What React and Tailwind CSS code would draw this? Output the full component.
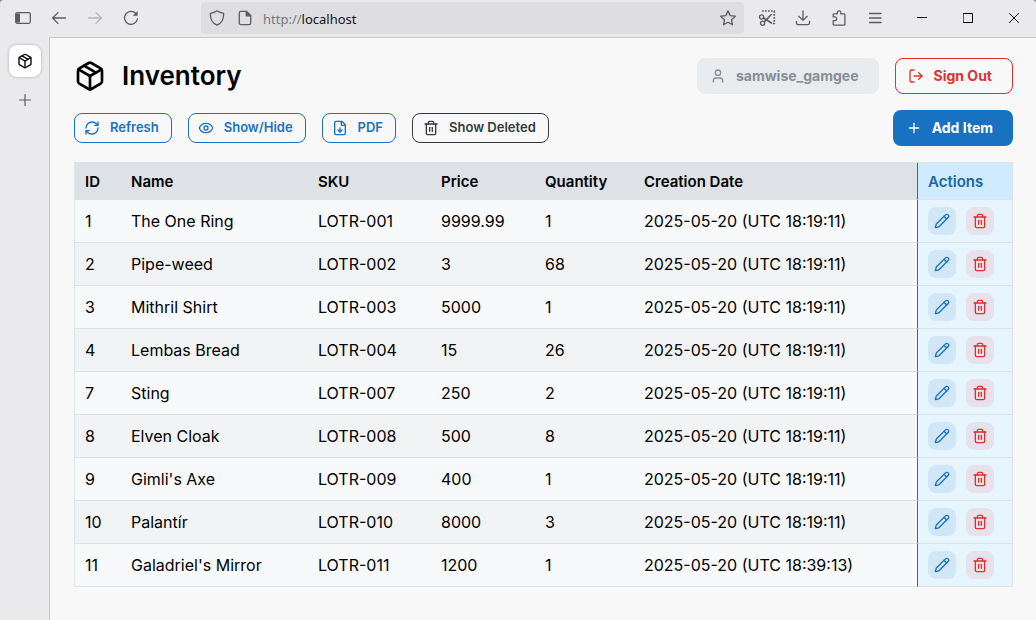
import React from "react";
import { Package, RefreshCw, Eye, FileDown, Trash2, Pencil, User, LogOut, Plus } from "lucide-react";

const items = [
  [1, "The One Ring", "LOTR-001", "9999.99", 1, "2025-05-20 (UTC 18:19:11)"],
  [2, "Pipe-weed", "LOTR-002", "3", 68, "2025-05-20 (UTC 18:19:11)"],
  [3, "Mithril Shirt", "LOTR-003", "5000", 1, "2025-05-20 (UTC 18:19:11)"],
  [4, "Lembas Bread", "LOTR-004", "15", 26, "2025-05-20 (UTC 18:19:11)"],
  [7, "Sting", "LOTR-007", "250", 2, "2025-05-20 (UTC 18:19:11)"],
  [8, "Elven Cloak", "LOTR-008", "500", 8, "2025-05-20 (UTC 18:19:11)"],
  [9, "Gimli's Axe", "LOTR-009", "400", 1, "2025-05-20 (UTC 18:19:11)"],
  [10, "Palantír", "LOTR-010", "8000", 3, "2025-05-20 (UTC 18:19:11)"],
  [11, "Galadriel's Mirror", "LOTR-011", "1200", 1, "2025-05-20 (UTC 18:39:13)"],
];

const columns = ["ID", "Name", "SKU", "Price", "Quantity", "Creation Date"];

function Glyph({ children, size = 16, sw = 1.3 }) {
  return (
    <svg
      width={size}
      height={size}
      viewBox={`0 0 ${size} ${size}`}
      fill="none"
      stroke="currentColor"
      strokeWidth={sw}
      strokeLinecap="round"
      strokeLinejoin="round"
      aria-hidden="true"
    >
      {children}
    </svg>
  );
}

function BarButton({ label, disabled, children }) {
  return (
    <button
      type="button"
      aria-label={label}
      disabled={disabled}
      className="flex h-8 w-9 shrink-0 items-center justify-center text-[#5b5b66] disabled:text-[#b4b4b9]"
    >
      {children}
    </button>
  );
}

function WindowButton({ label, children }) {
  return (
    <button type="button" aria-label={label} className="flex h-8 w-[46px] shrink-0 items-center justify-center text-black">
      {children}
    </button>
  );
}

function BrowserBar() {
  return (
    <header className="flex h-[37px] items-center pb-px pl-[5px]">
      <BarButton label="Toggle sidebar">
        <Glyph>
          <rect x="0.7" y="2.7" width="14.6" height="10.6" rx="1.5" />
          <path d="M1 3.500h4v9H1z" fill="currentColor" stroke="none" />
        </Glyph>
      </BarButton>
      <BarButton label="Back">
        <Glyph><path d="M14.5 8H1.8M7 2.6 1.6 8 7 13.4" /></Glyph>
      </BarButton>
      <BarButton label="Forward" disabled>
        <Glyph><path d="M1.5 8h12.7M9 2.6 14.4 8 9 13.4" /></Glyph>
      </BarButton>
      <BarButton label="Reload">
        <Glyph>
          <path d="M12.7 3.3A6.5 6.5 0 1 0 14.4 9" />
          <path d="M14.6 1v4.8H9.8z" fill="currentColor" stroke="none" />
        </Glyph>
      </BarButton>
      <div className="ml-[52px] flex h-8 min-w-0 flex-1 items-center rounded bg-[#dedee0] pl-2">
        <span className="flex shrink-0 gap-3 text-[#5b5b66]">
          <Glyph>
            <path d="M8 .8c2 1.5 4.200 2.200 6.600 2.500.3 5.200-1.600 9.700-6.600 11.900C3 13 1.100 8.500 1.400 3.300 3.800 3 6 2.300 8 .8z" />
          </Glyph>
          <Glyph>
            <path d="M3.700 1.400h5.800l4.200 4.200v7.400a1.600 1.600 0 0 1-1.600 1.600H3.900A1.600 1.600 0 0 1 2.300 13V3a1.600 1.600 0 0 1 1.400-1.600z" />
            <path d="M9.300 1.400v4.400h4.400z" fill="currentColor" />
          </Glyph>
        </span>
        <span className="ml-2.5 flex-1 truncate pt-px font-['Noto_Sans',sans-serif] text-[13px] leading-5 text-[#77777b]">
          http://<span className="text-[#15141a]">localhost</span>
        </span>
        <button type="button" aria-label="Bookmark this page" className="mr-2 shrink-0 text-[#5b5b66]">
          <Glyph>
            <path d="m8 .9 2.200 4.700 5.100.6-3.800 3.500 1 5.100L8 12.300l-4.500 2.500 1-5.100L.7 6.200l5.100-.6z" />
          </Glyph>
        </button>
      </div>
      <div className="ml-[5px] flex shrink-0">
        <BarButton label="Screenshot">
          <Glyph size={18}>
            <path d="M4 2h13M16.300 2v12.500h-3" strokeDasharray="1.800 1.200" strokeLinecap="butt" strokeWidth="1.700" />
            <circle cx="3.600" cy="8" r="2.100" />
            <circle cx="4.600" cy="14.200" r="2.100" />
            <path d="m5.500 9 8 5M6.300 12.900l7-7.400" strokeWidth="1.600" />
          </Glyph>
        </BarButton>
        <BarButton label="Downloads">
          <Glyph><path d="M8 .8v9.400M3.800 6.200 8 10.400l4.200-4.200M1.500 11.500v1.500a1.700 1.700 0 0 0 1.700 1.700h9.600a1.700 1.700 0 0 0 1.700-1.700v-1.500" /></Glyph>
        </BarButton>
        <BarButton label="Extensions">
          <Glyph>
            <path d="M2.200 6V4.600c0-.5.300-.8.800-.8h3.400V2.500a1.700 1.700 0 0 1 3.400 0v1.300h3.200c.5 0 .9.400.9.900v9.600c0 .5-.4.900-.9.900H3c-.5 0-.8-.4-.8-.9v-3.600h1.600a1.900 1.900 0 0 0 0-3.800H2.200z" />
          </Glyph>
        </BarButton>
        <BarButton label="Menu">
          <Glyph><path d="M2.500 3.500h11.500M2.500 8h11.500M2.500 12.500h11.500" /></Glyph>
        </BarButton>
      </div>
      <div className="-mr-px ml-1.5 flex shrink-0">
        <WindowButton label="Minimize">
          <Glyph size={10} sw={1}><path d="M0 4.500h10" /></Glyph>
        </WindowButton>
        <WindowButton label="Maximize">
          <Glyph size={10} sw={1}><rect x="0.5" y="0.500" width="9" height="9" /></Glyph>
        </WindowButton>
        <WindowButton label="Close">
          <Glyph size={10} sw={1}><path d="m0 0 10 10M10 0 0 10" /></Glyph>
        </WindowButton>
      </div>
    </header>
  );
}

function SideTabs() {
  return (
    <aside className="flex w-[49px] shrink-0 flex-col items-center pt-2">
      <button
        type="button"
        aria-label="Inventory tab"
        className="flex size-8 items-center justify-center rounded-lg bg-white text-black shadow-[0_0_3px_rgba(0,0,0,0.3)]"
      >
        <Package size={16} />
      </button>
      <button type="button" aria-label="New tab" className="mt-[15px] text-[#5b5b66]">
        <Glyph><path d="M8 2.500v11M2.500 8h11" strokeWidth="1.200" /></Glyph>
      </button>
    </aside>
  );
}

function ToolButton({ icon: Icon, dark, children }) {
  return (
    <button
      type="button"
      className={
        dark
          ? "flex h-[30px] items-center gap-2.5 rounded-lg border border-[#343a40] bg-[#f8f8f8] pr-3 pl-[10px] text-[13px] font-semibold text-[#343a40]"
          : "flex h-[30px] items-center gap-2.5 rounded-lg border border-[#1971c2] bg-[#f8f8f8] pr-3 pl-[9px] text-[13px] font-semibold text-[#1971c2]"
      }
    >
      <Icon size={16} />
      {children}
    </button>
  );
}

export default function App() {
  return (
    <div className="min-h-screen bg-[#8a8a8c] font-['Inter',sans-serif] text-black">
      <div className="flex min-h-screen flex-col rounded-t-[4px] bg-[#eaeaec]">
        <BrowserBar />
        <div className="flex flex-1">
          <SideTabs />
          <main className="flex min-w-0 flex-1 flex-col gap-4 border-t border-l border-[#c6c6c8] bg-[#f8f8f8] pt-5 pr-[23px] pb-6 pl-6">
            <div className="flex items-center justify-between">
              <div className="flex items-center gap-4">
                <Package size={32} />
                <h1 className="text-[26px] leading-9 font-semibold">Inventory</h1>
              </div>
              <div className="flex gap-4">
                <button
                  type="button"
                  disabled
                  className="flex h-9 items-center gap-2.5 rounded-lg bg-[#e9ecef] pr-5 pl-[13px] text-sm font-bold text-[#868e96]"
                >
                  <User size={16} />
                  samwise_gamgee
                </button>
                <button
                  type="button"
                  className="flex h-9 items-center gap-2.5 rounded-lg border border-[#e03131] pr-5 pl-3 text-sm font-bold text-[#e03131]"
                >
                  <LogOut size={16} />
                  Sign Out
                </button>
              </div>
            </div>
            <div className="flex items-center justify-between">
              <div className="flex gap-4">
                <ToolButton icon={RefreshCw}>Refresh</ToolButton>
                <ToolButton icon={Eye}>Show/Hide</ToolButton>
                <ToolButton icon={FileDown}>PDF</ToolButton>
                <ToolButton icon={Trash2} dark>Show Deleted</ToolButton>
              </div>
              <button
                type="button"
                className="flex h-9 items-center gap-2.5 rounded-lg bg-[#1971c2] pr-5 pl-[13px] text-sm font-bold text-white"
              >
                <Plus size={16} />
                Add Item
              </button>
            </div>
            <table className="w-full table-fixed border-separate border-spacing-0 border-t border-r border-l border-[#dee2e6] text-left">
              <colgroup>
                <col className="w-[46px]" />
                <col className="w-[187px]" />
                <col className="w-[123px]" />
                <col className="w-[104px]" />
                <col className="w-[99px]" />
                <col />
                <col className="w-[95px]" />
              </colgroup>
              <thead>
                <tr className="h-[37px] text-[15px] leading-5">
                  {columns.map((c) => (
                    <th key={c} scope="col" className="border-b border-[#dee2e6] bg-[#dee2e6] px-2.5 pt-px font-semibold">
                      {c}
                    </th>
                  ))}
                  <th scope="col" className="border-b border-l border-b-[#dee2e6] border-l-[#1971c2] bg-[#d0ebff] px-2.5 pt-px font-semibold text-[#1864ab]">
                    Actions
                  </th>
                </tr>
              </thead>
              <tbody>
                {items.map((row) => (
                  <tr key={row[0]} className="group h-[43px] text-base leading-6">
                    {row.map((v, i) => (
                      <td key={i} className="border-b border-[#dee2e6] bg-[#f8f9fb] px-2.5 whitespace-nowrap group-even:bg-[#f1f3f5]">
                        {v}
                      </td>
                    ))}
                    <td className="border-b border-l border-b-[#dee2e6] border-l-[#1971c2] bg-[#e7f5ff] px-2.5">
                      <div className="flex gap-2.5">
                        <button
                          type="button"
                          aria-label={`Edit ${row[1]}`}
                          className="flex size-7 items-center justify-center rounded-lg bg-[#d1e7f8] text-[#1971c2]"
                        >
                          <Pencil size={16} />
                        </button>
                        <button
                          type="button"
                          aria-label={`Delete ${row[1]}`}
                          className="flex size-7 items-center justify-center rounded-lg bg-[#e7e1eb] text-[#e03131]"
                        >
                          <Trash2 size={16} />
                        </button>
                      </div>
                    </td>
                  </tr>
                ))}
              </tbody>
            </table>
          </main>
        </div>
      </div>
    </div>
  );
}
